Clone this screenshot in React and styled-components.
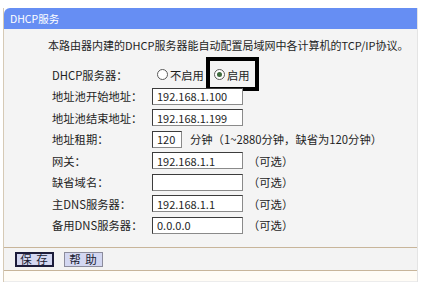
import React from "react"
import styled, { createGlobalStyle } from "styled-components"

const Global = createGlobalStyle`
    body {
        margin: 0;
        background: #ffffff;
        font-family: "Noto Sans CJK SC", "Liberation Sans", sans-serif;
        color: #1e1e1e;
    }
`

const Panel = styled.div`
    margin: 8px 0 0 3px;
    width: 415px;
    box-sizing: border-box;
    border-left: 1px solid #d6cab6;
    border-right: 1px solid #e4e4e4;
`

const TitleBar = styled.div`
    height: 21px;
    line-height: 21px;
    padding-left: 6px;
    background: #668ef3;
    color: #ffffff;
    font-size: 10.5px;
    border-top-left-radius: 6px;
`

const Body = styled.div`
    background: #f4f4f4;
    padding: 8px 0 11px;
`

const Intro = styled.p`
    margin: 0;
    padding-left: 44px;
    font-size: 11px;
    line-height: 16px;
    white-space: nowrap;
`

const Form = styled.div`
    display: grid;
    grid-template-columns: 100px 1fr;
    grid-auto-rows: 21.5px;
    align-items: center;
    padding-left: 48px;
    margin-top: 11px;
    font-size: 11.3px;
`

const Label = styled.div`
    white-space: nowrap;
`

const Field = styled.div`
    position: relative;
    display: flex;
    align-items: center;
    height: 100%;
    white-space: nowrap;
`

const TextBox = styled.input`
    box-sizing: border-box;
    width: ${props => props.$narrow ? "30px" : "91px"};
    height: 17px;
    margin: 0;
    padding: 0 4px;
    background: #ffffff;
    border: 1px solid #8a8a8a;
    border-top-color: #3c3c3c;
    border-left-color: #3c3c3c;
    font-family: "Noto Sans CJK SC", "Liberation Sans", sans-serif;
    font-size: 11px;
    color: #1e1e1e;
    outline: none;
`

const Note = styled.span`
    margin-left: ${props => props.$gap}px;
`

const Radio = styled.span`
    display: inline-flex;
    align-items: center;
    margin-left: ${props => props.$gap}px;
`

const Dot = styled.span`
    position: relative;
    display: inline-block;
    box-sizing: border-box;
    width: 11px;
    height: 11px;
    margin-right: 2px;
    border: 1px solid #5a5a5a;
    border-radius: 50%;
    background: #ffffff;
    &::after {
        content: "";
        display: ${props => props.$checked ? "block" : "none"};
        position: absolute;
        left: 2px;
        top: 2px;
        width: 5px;
        height: 5px;
        border-radius: 50%;
        background: #3e6a3e;
    }
`

const Highlight = styled.span`
    position: absolute;
    left: 54px;
    top: -7px;
    width: 53px;
    height: 34px;
    box-sizing: border-box;
    border: 4px solid #000000;
    pointer-events: none;
`

const Footer = styled.div`
    display: flex;
    align-items: center;
    gap: 10px;
    height: 22px;
    padding-left: 11px;
    background: #f3f3f3;
    border-top: 1px solid #c8b59a;
    border-bottom: 1px solid #c8b59a;
`

const Tail = styled.div`
    height: 10px;
    background: #fffcf6;
    border-bottom: 1px solid #ececec;
`

const Button = styled.button`
    box-sizing: border-box;
    width: 39px;
    height: 15px;
    padding: 0;
    background: #d3d7f1;
    border: ${props => props.$focused ? "2px solid #1c1c3a" : "1px solid #8c8c9c"};
    font-family: "Noto Sans CJK SC", sans-serif;
    font-size: 11.5px;
    line-height: 11px;
    color: #1a1a30;
    letter-spacing: 1px;
`

const rows = [
    { label: "地址池开始地址：", value: "192.168.1.100" },
    { label: "地址池结束地址：", value: "192.168.1.199" },
    { label: "地址租期：", value: "120", narrow: true, unit: "分钟", note: "（1~2880分钟，缺省为120分钟）" },
    { label: "网关：", value: "192.168.1.1", note: "（可选）" },
    { label: "缺省域名：", value: "", note: "（可选）" },
    { label: "主DNS服务器：", value: "192.168.1.1", note: "（可选）" },
    { label: "备用DNS服务器：", value: "0.0.0.0", note: "（可选）" }
]

const App = () =>
    <>
        <Global />
        <Panel>
            <TitleBar>DHCP服务</TitleBar>
            <Body>
                <Intro>本路由器内建的DHCP服务器能自动配置局域网中各计算机的TCP/IP协议。</Intro>
                <Form>
                    <Label>DHCP服务器：</Label>
                    <Field>
                        <Radio $gap={5}><Dot />不启用</Radio>
                        <Radio $gap={10}><Dot $checked />启用</Radio>
                        <Highlight />
                    </Field>
                    {rows.map(row =>
                        <React.Fragment key={row.label}>
                            <Label>{row.label}</Label>
                            <Field>
                                <TextBox $narrow={row.narrow} defaultValue={row.value} readOnly />
                                {row.unit && <Note $gap={8}>{row.unit}</Note>}
                                {row.note && <Note $gap={row.unit ? 0 : 5}>{row.note}</Note>}
                            </Field>
                        </React.Fragment>
                    )}
                </Form>
            </Body>
            <Footer>
                <Button $focused>保 存</Button>
                <Button>帮 助</Button>
            </Footer>
            <Tail />
        </Panel>
    </>

export default App
